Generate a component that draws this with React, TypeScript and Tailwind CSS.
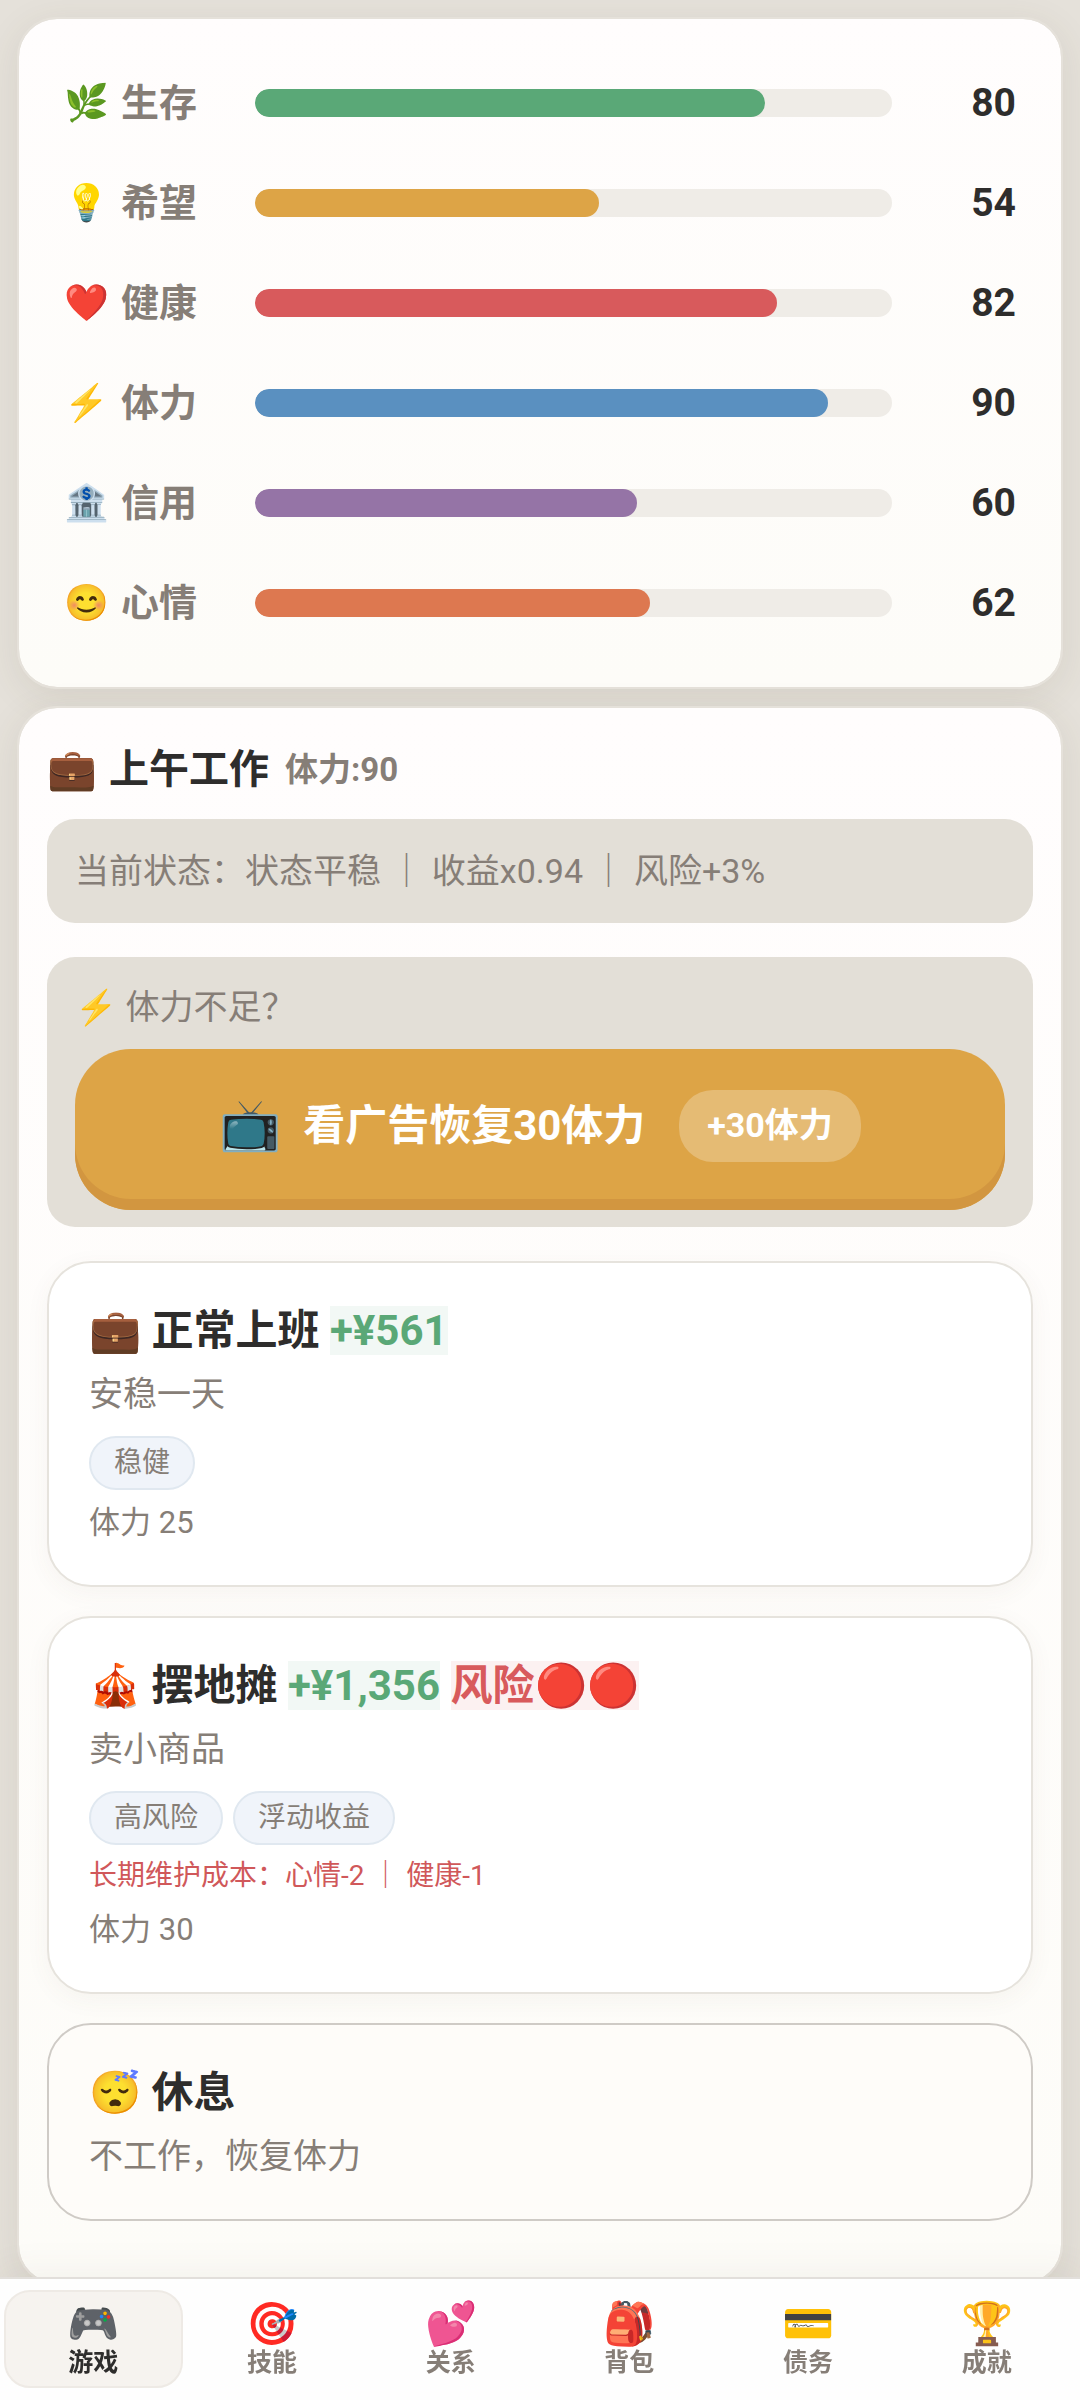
import React, { useState } from "react";

const stats = [
  { emoji: "🌿", label: "生存", value: 80, color: "bg-[#5aa877]" },
  { emoji: "💡", label: "希望", value: 54, color: "bg-[#dda446]" },
  { emoji: "❤️", label: "健康", value: 82, color: "bg-[#d85a5c]" },
  { emoji: "⚡", label: "体力", value: 90, color: "bg-[#5a90c0]" },
  { emoji: "🏦", label: "信用", value: 60, color: "bg-[#9574a6]" },
  { emoji: "😊", label: "心情", value: 62, color: "bg-[#dd7850]" },
];

const jobs = [
  { emoji: "💼", name: "正常上班", income: "+¥561", risk: "", desc: "安稳一天", tags: ["稳健"], upkeep: "", cost: 25 },
  {
    emoji: "🎪",
    name: "摆地摊",
    income: "+¥1,356",
    risk: "风险🔴🔴",
    desc: "卖小商品",
    tags: ["高风险", "浮动收益"],
    upkeep: "长期维护成本：心情-2 ｜ 健康-1",
    cost: 30,
  },
];

const tabs = [
  { emoji: "🎮", label: "游戏" },
  { emoji: "🎯", label: "技能" },
  { emoji: "💕", label: "关系" },
  { emoji: "🎒", label: "背包" },
  { emoji: "💳", label: "债务" },
  { emoji: "🏆", label: "成就" },
];

const panel =
  "rounded-[40px] border-2 border-[#e5e1da] bg-linear-to-b from-[#fffdfd] to-[#fdfcf8] bg-clip-padding shadow-[0_8px_36px_rgba(90,75,50,0.10)]";

function StatsPanel() {
  return (
    <section className={`${panel} px-[45px] py-[34px]`}>
      {stats.map((s) => (
        <div key={s.label} className="grid h-[100px] grid-cols-[191px_1fr_124px] items-center">
          <span className="flex items-center gap-3 text-[38px] font-bold text-[#867e77]">
            <span className="text-[36px]">{s.emoji}</span>
            <span>{s.label}</span>
          </span>
          <div className="h-7 overflow-hidden rounded-full bg-[#efece7]">
            <div className={`h-full rounded-full ${s.color}`} style={{ width: `${s.value}%` }} />
          </div>
          <span className="text-right text-[39px] font-bold text-[#2e2d2c]">{s.value}</span>
        </div>
      ))}
    </section>
  );
}

function JobCard({ job }: { job: (typeof jobs)[number] }) {
  return (
    <button
      type="button"
      className="block w-full rounded-[44px] border-2 border-[#e6e3dd] bg-white px-10 pt-[37px] pb-[38px] text-left shadow-[0_6px_24px_rgba(90,75,50,0.05)]"
    >
      <div className="text-[42px] leading-[62px] font-bold text-[#2e2d2c]">
        {job.emoji} {job.name} <span className="bg-[#f2f8f5] text-[#5aa877]">{job.income}</span>
        {job.risk && (
          <>
            {" "}
            <span className="bg-[#fcf1f1] text-[#d85a5c]">{job.risk}</span>
          </>
        )}
      </div>
      <div className="mt-1.5 text-[34px] leading-[52px] text-[#867e77]">{job.desc}</div>
      <div className="mt-4 flex gap-2.5">
        {job.tags.map((tag) => (
          <span
            key={tag}
            className="flex h-[54px] items-center rounded-full border-2 border-[#e0e8f0] bg-[#f0f4fa] px-[23px] text-[28px] text-[#867e77]"
          >
            {tag}
          </span>
        ))}
      </div>
      {job.upkeep && <div className="mt-2.5 text-[28px] leading-[42px] text-[#d0585a]">{job.upkeep}</div>}
      <div className="mt-2 text-[31px] leading-[49px] text-[#867e77]">体力 {job.cost}</div>
    </button>
  );
}

export default function App() {
  const [activeTab, setActiveTab] = useState("游戏");

  return (
    <div className="min-h-screen bg-[#e5e1da] font-[Roboto,'Noto_Sans_CJK_SC',sans-serif]">
      <main className="flex flex-col gap-[17px] px-[17px] pt-[17px] pb-[116px]">
        <StatsPanel />

        <section className={`${panel} px-7 pt-[30px] pb-[62px]`}>
          <h2 className="flex items-center gap-4 text-[40px] leading-[64px] font-bold text-[#2e2d2c]">
            <span className="flex gap-3">
              <span>💼</span>
              <span>上午工作</span>
            </span>
            <span className="text-[33px] text-[#867e77]">体力:90</span>
          </h2>

          {/* Current state */}
          <div className="mt-[17px] rounded-[28px] bg-[#e3dfd7] px-7 py-[26px] text-[34px] leading-[52px] text-[#867e77]">
            当前状态：状态平稳 ｜ 收益x0.94 ｜ 风险+3%
          </div>

          {/* Ad for stamina */}
          <div className="mt-[34px] rounded-[28px] bg-[#e3dfd7] px-7 pt-6 pb-[17px]">
            <div className="text-[34px] leading-[52px] text-[#867e77]">⚡ 体力不足？</div>
            <button
              type="button"
              className="mt-4 flex h-[161px] w-full items-center justify-center gap-[34px] rounded-[56px] bg-[#dda446] pb-2 text-[42px] font-bold text-white shadow-[inset_0_-11px_0_#d29640]"
            >
              <span className="flex items-center gap-[22px]">
                <span className="text-[50px]">📺</span>
                <span>看广告恢复30体力</span>
              </span>
              <span className="flex h-[72px] items-center rounded-[34px] bg-white/25 px-7 text-[34px]">+30体力</span>
            </button>
          </div>

          <div className="mt-[34px] flex flex-col gap-[29px]">
            {jobs.map((job) => (
              <JobCard key={job.name} job={job} />
            ))}
            <button
              type="button"
              className="block w-full rounded-[44px] border-2 border-[#cfcbc6] bg-[#fefcf9] px-10 py-[37px] text-left"
            >
              <div className="text-[42px] leading-[62px] font-bold text-[#2e2d2c]">😴 休息</div>
              <div className="mt-1.5 text-[34px] leading-[52px] text-[#867e77]">不工作，恢复体力</div>
            </button>
          </div>
        </section>
      </main>

      {/* Bottom tabs */}
      <nav className="fixed inset-x-0 bottom-0 grid grid-cols-6 border-t-2 border-[#e2dfdb] bg-[#fefefe] px-1 pt-[11px] pb-3 shadow-[0_-6px_36px_rgba(90,75,50,0.06)]">
        {tabs.map((tab) => (
          <button
            key={tab.label}
            type="button"
            onClick={() => setActiveTab(tab.label)}
            className={`flex h-[98px] flex-col items-center justify-center rounded-[26px] border-2 font-bold ${
              activeTab === tab.label
                ? "border-[#eeeae5] bg-[#f6f3ef] text-[#2e2d2c]"
                : "border-transparent text-[#867e77]"
            }`}
          >
            <span className="text-[42px] leading-[48px]">{tab.emoji}</span>
            <span className="text-[25px] leading-[30px]">{tab.label}</span>
          </button>
        ))}
      </nav>
    </div>
  );
}
